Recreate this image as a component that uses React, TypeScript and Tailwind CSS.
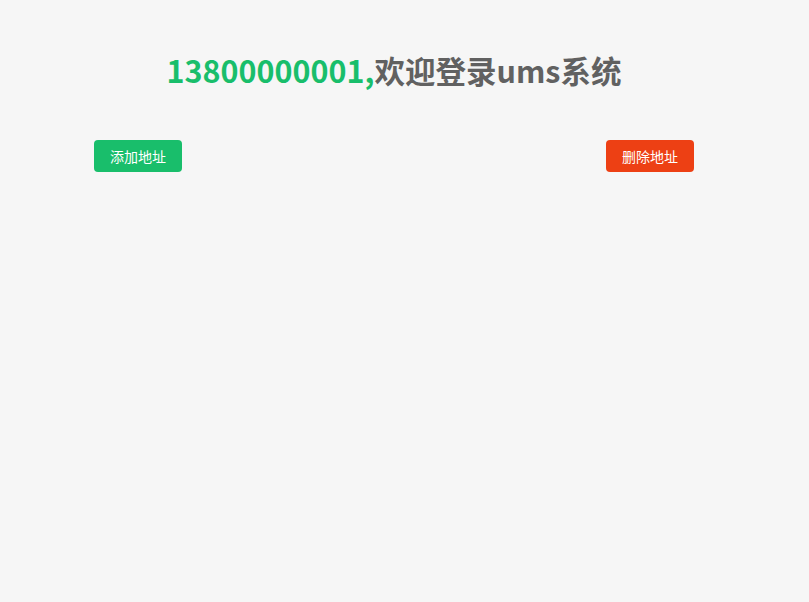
import React from 'react';

const App = () => {
  return (
    <div
      className="min-h-[602px] w-full bg-[#f6f6f6]"
      style={{ fontFamily: '"Noto Sans CJK SC", "Noto Sans", sans-serif' }}
    >
      <div className="ml-[94px] w-[600px] pt-[48px]">
        <h1 className="text-center text-[30.5px] font-bold leading-[44px] text-[#616161]">
          <span className="text-[#19be6b]">13800000001,</span>欢迎登录ums系统
        </h1>
        <div className="mt-[48px] flex items-center justify-between">
          <button className="h-8 w-[88px] rounded-[4px] bg-[#19be6b] text-[14px] text-white">
            添加地址
          </button>
          <button className="h-8 w-[88px] rounded-[4px] bg-[#ed4014] text-[14px] text-white">
            删除地址
          </button>
        </div>
      </div>
    </div>
  );
};

export default App;
